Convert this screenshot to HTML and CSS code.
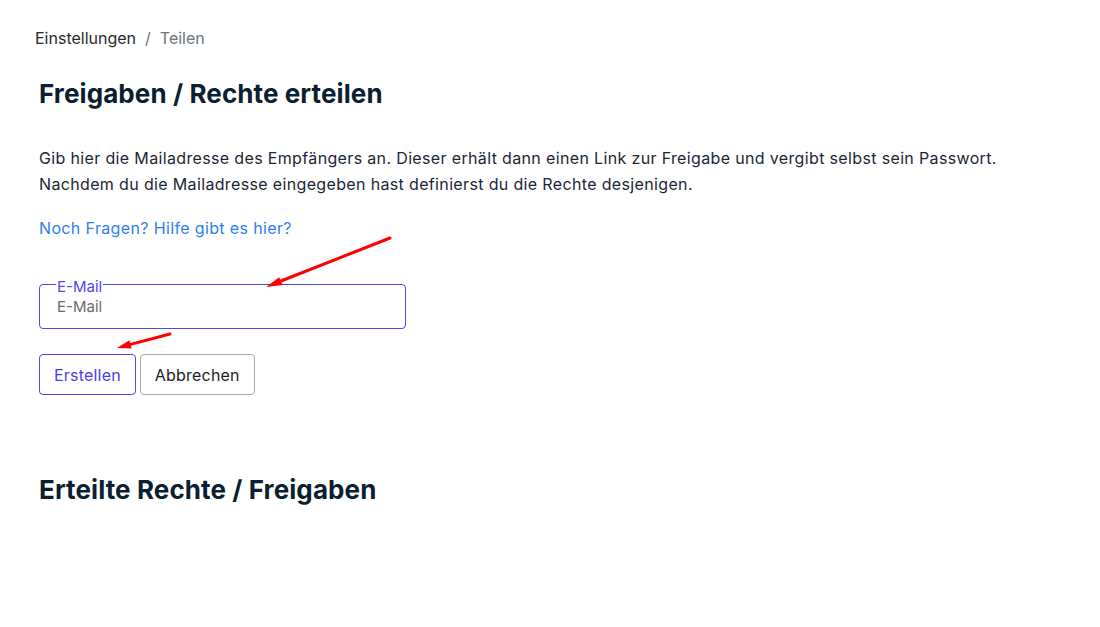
FILE: index.html
```html
<!DOCTYPE html>
<html lang="de">
<head>
<meta charset="utf-8">
<title>Teilen</title>
<link rel="stylesheet" href="styles.css">
</head>
<body>
<nav class="breadcrumb">
  <a class="crumb" href="#">Einstellungen</a>
  <span class="sep">/</span>
  <span class="crumb-current">Teilen</span>
</nav>
<main class="content">
  <h1 class="title">Freigaben / Rechte erteilen</h1>
  <p class="intro">Gib hier die Mailadresse des Empfängers an. Dieser erhält dann einen Link zur Freigabe und vergibt selbst sein Passwort.<br>Nachdem du die Mailadresse eingegeben hast definierst du die Rechte desjenigen.</p>
  <a class="help" href="#">Noch Fragen? Hilfe gibt es hier?</a>
  <form class="share-form">
    <div class="field">
      <label class="field-label" for="email">E-Mail</label>
      <input class="field-input" id="email" type="email" placeholder="E-Mail">
    </div>
    <div class="actions">
      <button type="button" class="btn btn-primary">Erstellen</button>
      <button type="button" class="btn btn-secondary">Abbrechen</button>
    </div>
  </form>
  <h1 class="title title-second">Erteilte Rechte / Freigaben</h1>
</main>
<svg class="annotations" width="1100" height="627" viewBox="0 0 1100 627" aria-hidden="true">
  <line x1="390" y1="238" x2="281" y2="281" stroke="#ff0000" stroke-width="3" stroke-linecap="round"/>
  <polygon points="266,287 282.6,285 279.2,277.2" fill="#ff0000"/>
  <line x1="170" y1="334" x2="130.5" y2="344.4" stroke="#ff0000" stroke-width="3" stroke-linecap="round"/>
  <polygon points="117,348 131.7,348.5 129.3,340.3" fill="#ff0000"/>
</svg>
</body>
</html>
```
FILE: styles.css
```css
* { box-sizing: border-box; }
html, body { margin: 0; padding: 0; background: #ffffff; }
body {
  font-family: Inter, "Noto Sans", sans-serif;
  color: #1a2735;
  position: relative;
  min-height: 627px;
}
.breadcrumb {
  padding: 28px 35px 0;
  font-size: 16px;
  line-height: 20px;
  display: flex;
  gap: 9px;
}
.crumb { color: #2a2a2a; text-decoration: none; }
.sep { color: #6c757d; }
.crumb-current { color: #6c757d; }
.content { padding: 0 39px; }
.title {
  margin: 30px 0 0;
  font-size: 26px;
  line-height: 32px;
  font-weight: 700;
  color: #0b1f30;
  letter-spacing: 0.1px;
}
.intro {
  margin: 35px 0 0;
  font-size: 16px;
  line-height: 26px;
  letter-spacing: 0.35px;
  color: #1a2735;
}
.help {
  display: block;
  margin-top: 18px;
  font-size: 16px;
  line-height: 26px;
  letter-spacing: 0.36px;
  color: #2b7ff0;
  text-decoration: none;
}
.share-form { margin-top: 43px; }
.field {
  position: relative;
  width: 367px;
}
.field-label {
  position: absolute;
  left: 17px;
  top: -5px;
  padding: 0 1px;
  background: #ffffff;
  font-size: 15px;
  line-height: 16px;
  color: #5145f5;
}
.field-input {
  display: block;
  width: 367px;
  height: 45px;
  padding: 0 17px;
  border: 1px solid #4a4af0;
  border-radius: 4px;
  font-family: inherit;
  font-size: 15px;
  color: #333;
  outline: none;
}
.field-input::placeholder { color: #6b6b6b; }
.actions {
  display: flex;
  gap: 4px;
  margin-top: 25px;
}
.btn {
  height: 41px;
  padding: 0 14px;
  border-radius: 4px;
  background: #ffffff;
  font-family: inherit;
  font-size: 16px;
  letter-spacing: 0.2px;
  cursor: pointer;
}
.btn-primary { border: 1px solid #4a4af0; color: #4a3cf0; }
.btn-secondary { border: 1px solid #a9a9a9; color: #222; }
.title-second { margin-top: 79px; }
.annotations {
  position: absolute;
  left: 0;
  top: 0;
  pointer-events: none;
}
```
